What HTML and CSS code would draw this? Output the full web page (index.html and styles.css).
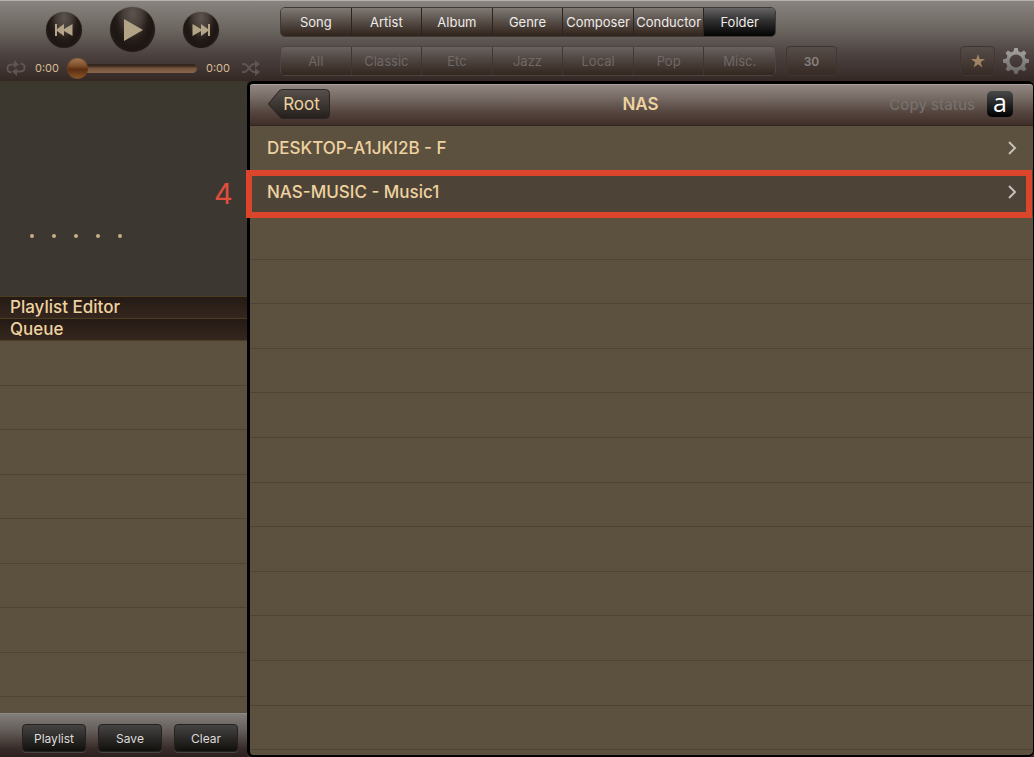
FILE: index.html
```html
<!DOCTYPE html>
<html lang="en">
<head>
    <meta charset="UTF-8">
    <meta name="viewport" content="width=device-width, initial-scale=1.0">
    <title>NAS</title>
    <link rel="stylesheet" href="styles.css">
</head>
<body>
    <header class="toolbar">
        <!-- Playback -->
        <div class="player">
            <div class="transport">
                <button class="round" aria-label="Previous">
                    <svg width="18" height="12" viewBox="0 0 18 12"><path d="M0 0h2v5L9 0v5L17.500 0v12L9 7v5L2 7v5H0z"/></svg>
                </button>
                <button class="round big" aria-label="Play">
                    <svg width="20" height="22" viewBox="0 0 20 22"><path d="M1 0L20 11L1 22z"/></svg>
                </button>
                <button class="round" aria-label="Next">
                    <svg width="18" height="12" viewBox="0 0 18 12"><path d="M18 0h-2v5L9 0v5L.5 0v12L9 7v5L16 7v5H18z"/></svg>
                </button>
            </div>
            <div class="progress">
                <button class="mode" aria-label="Repeat">
                    <svg width="20" height="16" viewBox="0 0 20 16"><path d="M5.500 12.500C2 12 1 10 1.500 7.500C2 5 4 4.500 6 4.500H11M14.500 3.500C18 4 19 6 18.500 8.500C18 11 16 11.500 14 11.500H9"/><path class="tip" d="M8 0l5 4.500-5 3.500zM11 16l-5-4.500L11 8z"/></svg>
                </button>
                <span>0:00</span>
                <input type="range" class="seek" min="0" max="100" value="0" aria-label="Position">
                <span>0:00</span>
                <button class="mode" aria-label="Shuffle">
                    <svg width="20" height="16" viewBox="0 0 20 16"><path d="M1 4h2c4 0 6 8 10 8h2M1 12h2c4 0 6-8 10-8h2"/><path class="tip" d="M14 0l5 4-5 4zM14 8l5 4-5 4z"/></svg>
                </button>
            </div>
        </div>

        <!-- Library filters -->
        <div class="filters">
            <nav class="segmented">
                <button>Song</button>
                <button>Artist</button>
                <button>Album</button>
                <button>Genre</button>
                <button>Composer</button>
                <button>Conductor</button>
                <button class="active">Folder</button>
            </nav>
            <div class="filter-row">
                <div class="segmented dim">
                    <button disabled>All</button>
                    <button disabled>Classic</button>
                    <button disabled>Etc</button>
                    <button disabled>Jazz</button>
                    <button disabled>Local</button>
                    <button disabled>Pop</button>
                    <button disabled>Misc.</button>
                </div>
                <button class="inset count">30</button>
                <button class="inset star" aria-label="Favourites">
                    <svg width="14" height="14" viewBox="0 0 14 14"><path d="M7 0l1.700 5H14L9.700 8.200l1.600 5.300L7 10.300l-4.300 3.200 1.600-5.300L0 5h5.300z"/></svg>
                </button>
                <button class="gear" aria-label="Settings">
                    <svg width="26" height="26" viewBox="-13 -13 26 26">
                        <defs>
                            <linearGradient id="metal" x1="0" y1="-13" x2="0" y2="13" gradientUnits="userSpaceOnUse">
                                <stop offset="0" stop-color="#a7a5a4"/>
                                <stop offset="1" stop-color="#686463"/>
                            </linearGradient>
                            <g id="teeth"><path d="M-2.600-9L-1.700-13H1.700L2.600-9zM-2.600 9L-1.700 13H1.700L2.600 9z"/></g>
                        </defs>
                        <mask id="cog">
                            <g fill="#fff">
                                <circle r="10"/>
                                <use href="#teeth"/>
                                <use href="#teeth" transform="rotate(45)"/>
                                <use href="#teeth" transform="rotate(90)"/>
                                <use href="#teeth" transform="rotate(135)"/>
                            </g>
                            <circle r="6.500" fill="#000"/>
                        </mask>
                        <rect x="-13" y="-13" width="26" height="26" fill="url(#metal)" mask="url(#cog)"/>
                    </svg>
                </button>
            </div>
        </div>
    </header>

    <main class="content">
        <aside class="sidebar">
            <div class="cover">
                <div class="rating"><i></i><i></i><i></i><i></i><i></i></div>
            </div>
            <h2 class="section">Playlist Editor</h2>
            <h2 class="section">Queue</h2>
            <ul class="queue">
                <li></li><li></li><li></li><li></li>
                <li></li><li></li><li></li><li></li>
            </ul>
            <footer class="actions">
                <button>Playlist</button>
                <button>Save</button>
                <button>Clear</button>
            </footer>
        </aside>

        <section class="browser">
            <div class="titlebar">
                <button class="back">
                    <svg viewBox="0 0 62 30" width="62" height="30">
                        <defs>
                            <linearGradient id="backfill" x2="0" y2="1">
                                <stop offset="0" stop-color="#57504c"/>
                                <stop offset="1" stop-color="#251f1c"/>
                            </linearGradient>
                        </defs>
                        <path d="M13 1Q14 .5 15 .5H57.500Q61.500 .5 61.500 4.500V25.500Q61.500 29.500 57.500 29.500H15Q13 29.500 12 28L1 16Q0 15 1 14L11 2Q12 1 13 1z" fill="url(#backfill)" stroke="#2b2522"/>
                    </svg>
                    <span>Root</span>
                </button>
                <h1>NAS</h1>
                <div class="status">
                    <button class="copy" disabled>Copy status</button>
                    <button class="letter">a</button>
                </div>
            </div>
            <ul class="folders">
                <li><a href="#">DESKTOP-A1JKI2B - F <svg width="10" height="14" viewBox="0 0 10 14"><path d="M2 1l6 6-6 6"/></svg></a></li>
                <li class="selected">
                    <a href="#">NAS-MUSIC - Music1 <svg width="10" height="14" viewBox="0 0 10 14"><path d="M2 1l6 6-6 6"/></svg></a>
                    <span class="marker"></span>
                    <span class="step">4</span>
                </li>
                <li></li><li></li><li></li><li></li><li></li><li></li>
                <li></li><li></li><li></li><li></li><li></li><li></li>
            </ul>
        </section>
    </main>
</body>
</html>
```
FILE: styles.css
```css
* {
    box-sizing: border-box;
}

body {
    margin: 0;
    min-height: 100vh;
    display: flex;
    flex-direction: column;
    background: #332825;
    color: #eed2a0;
    font-family: Inter, "Liberation Sans", sans-serif;
    font-size: 13px;
}

button {
    font: inherit;
    color: inherit;
    border: none;
    background: none;
    padding: 0;
    cursor: pointer;
}

svg {
    display: block;
}

ul {
    list-style: none;
    margin: 0;
    padding: 0;
}

h1, h2 {
    margin: 0;
    font-weight: 500;
}

/* Toolbar */
.toolbar {
    display: flex;
    gap: 19px;
    height: 81px;
    padding: 6px 5px 0 6px;
    border-top: 1px solid #b5b2ad;
    background: linear-gradient(#89847f, #6c6661 35%, #4b413e 68%, #342825);
}

.player {
    width: 255px;
}

.transport {
    display: flex;
    align-items: center;
    gap: 28px;
    padding-left: 40px;
}

.round {
    display: flex;
    align-items: center;
    justify-content: center;
    width: 36px;
    height: 36px;
    border-radius: 50%;
    background: radial-gradient(ellipse at 50% 15%, #5d544e 0, #453c37 30%, #251d18 50%, #1d1613 65%, #2c2623 100%);
    box-shadow: 0 0 1px #3b3430;
}

.round.big {
    width: 45px;
    height: 45px;
}

.round svg {
    fill: #b3a488;
}

.progress {
    display: flex;
    align-items: center;
    gap: 9px;
    height: 20px;
    margin-top: 6px;
    font-size: 11px;
    color: #d6bd92;
}

.progress span {
    width: 23px;
}

.progress span:last-of-type {
    margin-right: 3px;
}

.mode svg {
    fill: none;
    stroke: #5f5551;
    stroke-width: 2;
}

.mode .tip {
    fill: #5f5551;
    stroke: none;
}

.seek {
    appearance: none;
    flex: 1;
    min-width: 0;
    height: 21px;
    margin: 0;
    background: none;
}

.seek::-webkit-slider-runnable-track {
    height: 9px;
    border-radius: 5px;
    background: linear-gradient(#30221b, #3f2c21 25%, #74533c 45%, #896449);
}

.seek::-webkit-slider-thumb {
    appearance: none;
    width: 21px;
    height: 21px;
    margin-top: -6px;
    border-radius: 50%;
    background: linear-gradient(#a87c58, #7b4a26 40%, #5a2e10 55%, #8e5a2d);
    box-shadow: inset 0 0 2px #6b3e1c;
}

.filters {
    flex: 1;
    display: flex;
    flex-direction: column;
    gap: 9px;
}

.filter-row {
    display: flex;
    align-items: center;
}

.segmented {
    display: grid;
    grid-template-columns: repeat(7, 1fr);
    width: 496px;
    height: 30px;
    border: 1px solid #3f3935;
    border-radius: 5px;
    overflow: hidden;
    color: #eeebe8;
}

.segmented button {
    background: linear-gradient(#807a75, #5a514b 45%, #30231b);
    border-right: 1px solid #2c241f;
    white-space: nowrap;
}

.segmented .active {
    background: linear-gradient(#666463, #302f30 45%, #030303);
}

.segmented button:last-child {
    border-right: none;
}

.segmented.dim {
    border-color: #4c4441;
    color: #6f6966;
}

.segmented.dim button {
    color: inherit;
    background: linear-gradient(#69625f, #4c423e 50%, #33271f);
    border-color: #403632;
}

.inset {
    display: flex;
    align-items: center;
    justify-content: center;
    height: 30px;
    border: 1px solid #3f3733;
    border-radius: 4px;
    background: linear-gradient(#564d48, #372a24);
}

.count {
    width: 51px;
    margin-left: 10px;
    font-weight: 600;
    font-size: 12px;
    color: #888380;
}

.star {
    width: 35px;
    margin-left: auto;
}

.star svg {
    fill: #a18463;
}

.gear {
    margin-left: 8px;
}

/* Page body */
.content {
    flex: 1;
    display: flex;
    min-height: 0;
}

.sidebar {
    width: 247px;
    display: flex;
    flex-direction: column;
    background: #5c503f;
}

.cover {
    height: 215px;
    padding: 153px 0 0 30px;
    background: linear-gradient(#3b382e, #3c3730 20%);
}

.rating {
    display: flex;
    gap: 18px;
}

.rating i {
    width: 4px;
    height: 4px;
    border-radius: 50%;
    background: #c9b083;
}

.section {
    height: 22px;
    padding-left: 10px;
    border-top: 1px solid #4c3c22;
    background: linear-gradient(#241b14, #35261e);
    font-size: 17px;
    line-height: 21px;
}

.queue {
    flex: 1;
    display: flex;
    flex-direction: column;
    padding-bottom: 16px;
    border-top: 1px solid #4c3c22;
}

.queue li,
.folders li {
    flex: 1;
    border-bottom: 1px solid #4f4338;
}

.actions {
    display: flex;
    gap: 12px;
    height: 44px;
    padding: 10px 9px 0 22px;
    border-top: 1px solid #8c8884;
    background: linear-gradient(#827e7a, #635b57 40%, #382c29 80%, #2b201d);
    font-size: 12px;
    color: #dedbd8;
}

.actions button {
    flex: 1;
    height: 28px;
    border: 1px solid #24211f;
    border-radius: 4px;
    background: linear-gradient(#464442, #2c2a28 50%, #11100d);
    box-shadow: 0 1px 0 #4c4441;
}

/* Folder browser */
.browser {
    flex: 1;
    display: flex;
    flex-direction: column;
    border: 3px solid #000;
    border-right-width: 1px;
    border-bottom-width: 2px;
    border-radius: 6px;
    background: #5c503f;
}

.titlebar {
    display: grid;
    grid-template-columns: 1fr auto 1fr;
    align-items: center;
    height: 42px;
    padding: 0 20px 2px 18px;
    border-top: 1px solid #aaa19d;
    border-bottom: 1px solid #30241f;
    border-radius: 3px 3px 0 0;
    background: linear-gradient(#918681, #746862 35%, #574841 65%, #402f28);
}

.titlebar h1 {
    font-size: 17px;
    font-weight: 600;
}

.back {
    display: grid;
    justify-self: start;
    align-items: center;
    font-size: 17px;
}

.back svg,
.back span {
    grid-area: 1 / 1;
}

.back span {
    padding-left: 5px;
}

.status {
    display: flex;
    align-items: center;
    justify-content: flex-end;
    gap: 12px;
}

.copy {
    font-size: 15px;
    font-weight: 500;
    color: #75706c;
}

.letter {
    width: 26px;
    height: 26px;
    padding-bottom: 4px;
    border-radius: 5px;
    background: linear-gradient(#494949, #000);
    color: #fff;
    font: 500 25px/20px "Open Sans", sans-serif;
}

.folders {
    flex: 1;
    display: flex;
    flex-direction: column;
    padding-bottom: 5px;
}

.folders li {
    position: relative;
}

.folders a {
    display: flex;
    align-items: center;
    justify-content: space-between;
    height: 100%;
    padding: 0 16px 0 17px;
    color: inherit;
    font-size: 17px;
    font-weight: 500;
    text-decoration: none;
}

.folders a svg {
    fill: none;
    stroke: #c5c0bb;
    stroke-width: 2;
}

.selected {
    background: #4d4437;
}

.marker {
    position: absolute;
    inset: -1px 1px -4px -4px;
    border: 6px solid #da452b;
    pointer-events: none;
}

.step {
    position: absolute;
    left: -36px;
    top: 4px;
    color: #e04d3c;
    font-size: 29px;
    line-height: 38px;
}
```
